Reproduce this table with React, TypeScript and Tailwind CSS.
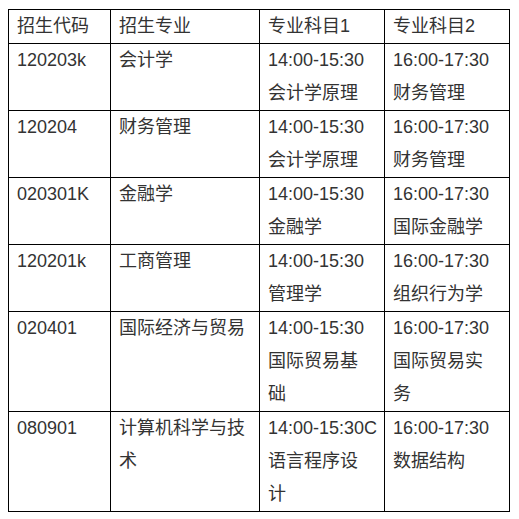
import React from "react";

const rows: [string, string, [string, string], [string, string]][] = [
  ["120203k", "会计学", ["14:00-15:30", "会计学原理"], ["16:00-17:30", "财务管理"]],
  ["120204", "财务管理", ["14:00-15:30", "会计学原理"], ["16:00-17:30", "财务管理"]],
  ["020301K", "金融学", ["14:00-15:30", "金融学"], ["16:00-17:30", "国际金融学"]],
  ["120201k", "工商管理", ["14:00-15:30", "管理学"], ["16:00-17:30", "组织行为学"]],
  ["020401", "国际经济与贸易", ["14:00-15:30", "国际贸易基础"], ["16:00-17:30", "国际贸易实务"]],
  ["080901", "计算机科学与技术", ["14:00-15:30C", "语言程序设计"], ["16:00-17:30", "数据结构"]],
];

const cell =
  "border border-[#000000] pl-2 pr-[9px] py-0 align-top text-left font-normal leading-[33px]";

function Subj({ v }: { v: [string, string] }) {
  return (
    <>
      <span className="whitespace-nowrap">{v[0]}</span>
      {v[1]}
    </>
  );
}

export default function App() {
  return (
    <div
      className="w-[519px] h-[519px] bg-white pl-[8px] pt-[9px] text-[18px] text-[#333333]"
      style={{ fontFamily: '"Liberation Sans", "Noto Sans CJK SC", sans-serif' }}
    >
      <table className="table-fixed border-collapse w-[502px]">
        <colgroup>
          <col className="w-[102px]" />
          <col className="w-[149px]" />
          <col className="w-[125px]" />
          <col className="w-[125px]" />
        </colgroup>
        <thead>
          <tr>
            <th className={cell}>招生代码</th>
            <th className={cell}>招生专业</th>
            <th className={cell}>专业科目1</th>
            <th className={cell}>专业科目2</th>
          </tr>
        </thead>
        <tbody>
          {rows.map((r, i) => (
            <tr key={i}>
              <td className={cell}>{r[0]}</td>
              <td className={cell}>{r[1]}</td>
              <td className={cell}>
                <Subj v={r[2]} />
              </td>
              <td className={cell}>
                <Subj v={r[3]} />
              </td>
            </tr>
          ))}
        </tbody>
      </table>
    </div>
  );
}
